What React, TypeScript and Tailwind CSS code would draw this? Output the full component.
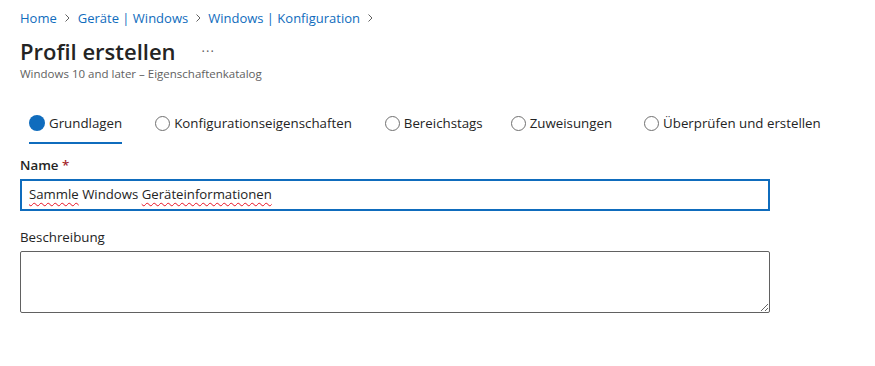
import { useState } from 'react';

const tabs = [
  { id: 'basics', label: 'Grundlagen', ml: 'ml-[7px]' },
  { id: 'config', label: 'Konfigurationseigenschaften', ml: 'ml-[29px]' },
  { id: 'scope', label: 'Bereichstags', ml: 'ml-[29px]' },
  { id: 'assign', label: 'Zuweisungen', ml: 'ml-[24px]' },
  { id: 'review', label: 'Überprüfen und erstellen', ml: 'ml-[28px]' },
];

function Chevron() {
  return (
    <svg width="12" height="12" viewBox="0 0 12 12" className="mx-[4px] text-[#616161]">
      <path d="M4.5 2.5 8 6l-3.5 3.5" fill="none" stroke="currentColor" strokeWidth="1" />
    </svg>
  );
}

export default function App() {
  const [active] = useState('basics');

  return (
    <div
      className="w-[875px] h-[366px] bg-white pl-5 text-[#242424]"
      style={{ fontFamily: '"Open Sans", "Noto Sans", sans-serif' }}
    >
      {/* Breadcrumb */}
      <nav className="flex items-center pt-[9px] text-[13px] leading-[18px] text-[#0f6cbd]">
        <span>Home</span>
        <Chevron />
        <span className="ml-[1px]">Geräte | Windows</span>
        <Chevron />
        <span>Windows | Konfiguration</span>
        <Chevron />
      </nav>

      {/* Header */}
      <div className="flex items-center mt-[9px] h-[30px]">
        <h1 className="text-[22px] font-semibold leading-[30px]">Profil erstellen</h1>
        <span className="ml-[26px] text-[13px] leading-none text-[#616161] tracking-[1px]">···</span>
      </div>
      <div className="text-[11.5px] leading-[16px] text-[#616161]">
        Windows 10 and later – Eigenschaftenkatalog
      </div>

      {/* Wizard tabs */}
      <div className="flex mt-[31px]">
        {tabs.map((t) => {
          const on = t.id === active;
          return (
            <div key={t.id} className={`flex flex-col px-[2px] ${t.ml}`}>
              <div className="flex items-center gap-[4px] h-[20px]">
                {on ? (
                  <span className="w-4 h-4 rounded-full bg-[#0f6cbd]" />
                ) : (
                  <span className="w-[15px] h-[15px] rounded-full border border-[#707070]" />
                )}
                <span className="text-[13.3px] leading-[20px] text-[#242424]">{t.label}</span>
              </div>
              <div className={`mt-[9px] h-[2px] ${on ? 'bg-[#0f6cbd]' : 'bg-transparent'}`} />
            </div>
          );
        })}
      </div>

      {/* Name */}
      <div className="mt-[11px] text-[13.3px] leading-[20px] font-semibold">
        Name <span className="text-[#a4262c]">*</span>
      </div>
      <div className="mt-[4px] w-[750px] h-[32px] border-2 border-[#0f6cbd] flex items-center pl-[7px] text-[13.2px]">
        <span className="underline decoration-wavy decoration-[#e81123] underline-offset-[3px] decoration-1">Sammle</span>
        <span>&nbsp;Windows&nbsp;</span>
        <span className="underline decoration-wavy decoration-[#e81123] underline-offset-[3px] decoration-1">Geräteinformationen</span>
      </div>

      {/* Beschreibung */}
      <div className="mt-[16px] text-[13.3px] leading-[20px] text-[#242424]">Beschreibung</div>
      <textarea className="block mt-[4px] w-[750px] h-[62px] border border-[#616161] rounded-[2px] resize-y outline-none" />
    </div>
  );
}
